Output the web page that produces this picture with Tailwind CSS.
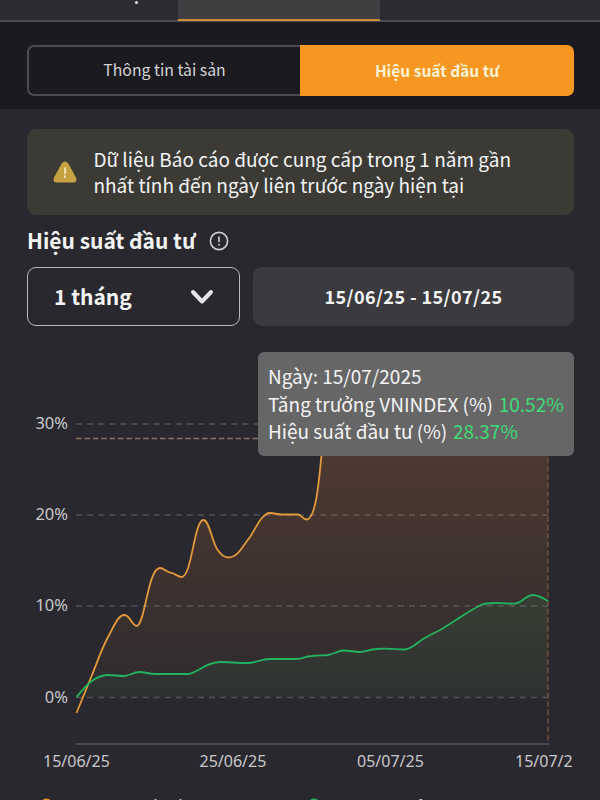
<!DOCTYPE html>
<html lang="vi">
<head>
    <meta charset="UTF-8">
    <meta name="viewport" content="width=device-width, initial-scale=1.0">
    <title>Hiệu suất đầu tư</title>
    <script src="https://cdn.jsdelivr.net/npm/@tailwindcss/browser@4"></script>
</head>
<body class="w-[600px] h-[800px] overflow-hidden bg-[#29282e] text-[#f4f4f5] font-['Noto_Sans_CJK_SC','Noto_Sans',sans-serif]">

    <!-- Tab chính -->
    <nav class="flex h-[22px] border-b-2 border-[#4b4a50] bg-[#2c2b31]">
        <div class="w-[178px] pl-[135px]">
            <div class="size-[3px] mt-px rounded-full bg-[#e8e8ea]"></div>
        </div>
        <div class="w-[202px] h-[21px] bg-[#3f3f41] border-b-2 border-[#d08c34]"></div>
    </nav>

    <!-- Tab phụ -->
    <div class="h-[87px] bg-[#1b1a1e] px-[27px] pt-[23px]">
        <div class="flex h-[51px] w-[547px] text-[15.8px] leading-[46px] text-center">
            <button class="w-[273px] rounded-l-[7px] border-2 border-r-0 border-[#4c4b4f] pb-[2px] text-[#d5d5d7]">Thông tin tài sản</button>
            <button class="flex-1 rounded-r-[7px] bg-[#f79620] pb-[2px] font-bold text-[15.5px] text-[#fff3d6]">Hiệu suất đầu tư</button>
        </div>
    </div>

    <main class="px-[27px] pt-5 w-[601px]">
        <!-- Cảnh báo -->
        <div class="flex items-center h-[86px] w-[547px] rounded-[9px] bg-[#3b3a35] pl-[26px]">
            <svg class="w-6 h-[22px] shrink-0" viewBox="0 0 24 22">
                <path d="M8.7 2.4Q12-1.4 15.3 2.4L23 16.6Q24.5 21.2 20.5 21.5H3.5Q-.5 21.2 1 16.6Z" fill="#c6a240"/>
                <path d="M12 7v5.5M12 15v1.2" stroke="#f8ecc9" stroke-width="1.7" stroke-linecap="round"/>
            </svg>
            <p class="ml-[16.5px] text-[19px] leading-[26px] whitespace-nowrap">
                <span>Dữ liệu Báo cáo được cung cấp trong 1 năm gần</span><br>
                <span>nhất tính đến ngày liên trước ngày hiện tại</span>
            </p>
        </div>

        <div class="flex items-center h-[52px] gap-[14px]">
            <h2 class="text-[21px] font-bold whitespace-nowrap">Hiệu suất đầu tư</h2>
            <svg class="size-5" viewBox="0 0 20 20" fill="none" stroke="#d0d0d3" stroke-width="1.6">
                <circle cx="10" cy="10" r="8.6"/>
                <path d="M10 5.5v5.5M10 12.7v1.7"/>
            </svg>
        </div>

        <!-- Bộ lọc thời gian -->
        <div class="flex gap-[13px] h-[59px] w-[547px] font-bold">
            <button class="flex items-center justify-between w-[213px] rounded-[9px] border-[1.5px] border-[#b8b8bb] pl-[26px] pr-[25px] text-[21px]">
                <span>1 tháng</span>
                <svg class="w-6 h-4" viewBox="0 0 24 16" fill="none" stroke="#e6e6e8" stroke-width="4" stroke-linecap="round" stroke-linejoin="round">
                    <path d="M3 3l9 9.5L21 3"/>
                </svg>
            </button>
            <div class="flex-1 flex items-center justify-center rounded-[9px] bg-[#3b3a3f] pb-px text-[18px] tracking-[0.42px]">
                <span>15/06/25 - 15/07/25</span>
            </div>
        </div>
    </main>

    <!-- Biểu đồ -->
    <section class="relative h-[474px]">
        <svg class="block w-[600px] h-[474px] font-['Noto_Sans',sans-serif]" viewBox="0 326 600 474" fill="none">
            <defs>
                <linearGradient id="orange" gradientUnits="userSpaceOnUse" x1="0" y1="424" x2="0" y2="697">
                    <stop offset="0" stop-color="#f7893a" stop-opacity=".19"/>
                    <stop offset="1" stop-color="#f7893a" stop-opacity=".03"/>
                </linearGradient>
                <linearGradient id="green" gradientUnits="userSpaceOnUse" x1="0" y1="595" x2="0" y2="697">
                    <stop offset="0" stop-color="#20a050" stop-opacity=".12"/>
                    <stop offset="1" stop-color="#20a050" stop-opacity=".05"/>
                </linearGradient>
            </defs>

            <g stroke="#535258" stroke-width="1.4" stroke-dasharray="6 5.1">
                <path d="M76 424H548M76 515H548M76 606H548M76 697.500H548"/>
            </g>
            <path d="M76 744H549" stroke="#4b4a50" stroke-width="2"/>

            <path fill="url(#orange)" d="M84 697L92 675C97 663 101 650 108 637C114 626 118 615 124.500 615C130 615 132 626 137 626C145 624 148 568 160 568C164 568 167 573 172 573C176 574 178 577 181.500 577C192 577 194 520 203.500 520C209 520 212 541 217 549C221 555 224 557.500 228 557.500C238 557.500 242 547 250 537C256 528 262 513 270 513C275 513 277 514.500 282 514.500H298C301 514.500 303 519.500 306.500 519.500C316 519.500 319 480 321.500 455L325 420H548V697Z"/>
            <path fill="url(#green)" d="M76.500 697C84 688 94 675 108 675C114 675 118 676 124 676C130 676 133 672 139 672C145 672 149 674 155 674H187C197 674 205 662 220 662C229 662 237 663 247 663C257 663 260 659 270 659H296C303 659 306 656 312 656C318 655 323 655.500 328 655C334 654 338 650.500 344 650.500C350 650.500 354 652 360 652C365 652 370 649 376 649C388 648 396 649.500 405 649.500C412 649 418 642 423 639C430 635 434 633 440 630C454 622 468 611 481 605C490 601 500 604 515 603.500C522 603 526 595 533 595C538 595 543 598 548 601V697Z"/>

            <path d="M76 438.500H548" stroke="#8b7467" stroke-width="1.5" stroke-dasharray="5.600 2.800"/>
            <path d="M548 424V743" stroke="#725443" stroke-width="1.4" stroke-dasharray="5.600 2.800"/>

            <path stroke="#e39a3b" stroke-width="1.8" d="M76.500 713L92 675C97 663 101 650 108 637C114 626 118 615 124.500 615C130 615 132 626 137 626C145 624 148 568 160 568C164 568 167 573 172 573C176 574 178 577 181.500 577C192 577 194 520 203.500 520C209 520 212 541 217 549C221 555 224 557.500 228 557.500C238 557.500 242 547 250 537C256 528 262 513 270 513C275 513 277 514.500 282 514.500H298C301 514.500 303 519.500 306.500 519.500C316 519.500 319 480 321.500 455L325 420"/>
            <path stroke="#23b35f" stroke-width="1.8" d="M76.500 697C84 688 94 675 108 675C114 675 118 676 124 676C130 676 133 672 139 672C145 672 149 674 155 674H187C197 674 205 662 220 662C229 662 237 663 247 663C257 663 260 659 270 659H296C303 659 306 656 312 656C318 655 323 655.500 328 655C334 654 338 650.500 344 650.500C350 650.500 354 652 360 652C365 652 370 649 376 649C388 648 396 649.500 405 649.500C412 649 418 642 423 639C430 635 434 633 440 630C454 622 468 611 481 605C490 601 500 604 515 603.500C522 603 526 595 533 595C538 595 543 598 548 601"/>

            <g fill="#c9c9cc" font-size="16">
                <g text-anchor="end" font-size="16.500">
                    <text x="68" y="429">30%</text>
                    <text x="68" y="520">20%</text>
                    <text x="68" y="611">10%</text>
                    <text x="68" y="702.500">0%</text>
                </g>
                <text x="43" y="766.500">15/06/25</text>
                <text x="199.500" y="766.500">25/06/25</text>
                <text x="357" y="766.500">05/07/25</text>
                <text x="515" y="766.500">15/07/2</text>
            </g>

            <!-- Chú giải -->
            <circle cx="46.500" cy="805" r="6.500" fill="#f79620"/>
            <circle cx="314" cy="805" r="6.500" fill="#23b35f"/>
            <g fill="#d9d9dc" font-size="18">
                <text x="83" y="814">Hiệu suất đầu tư (%)</text>
                <text x="344" y="814">Tăng trưởng VNINDEX (%)</text>
            </g>
        </svg>

        <!-- Tooltip -->
        <div class="absolute left-[258px] top-[26px] w-[316px] h-[104px] rounded-[6px] bg-[#666666] pl-[10px] pt-[10px] text-[19px] leading-[27.7px] whitespace-nowrap">
            <p>Ngày: 15/07/2025</p>
            <p>Tăng trưởng VNINDEX (%) <span class="ml-[1.5px] text-[#3fdc77]">10.52%</span></p>
            <p>Hiệu suất đầu tư (%) <span class="ml-[1.5px] text-[#3fdc77]">28.37%</span></p>
        </div>
    </section>

</body>
</html>
